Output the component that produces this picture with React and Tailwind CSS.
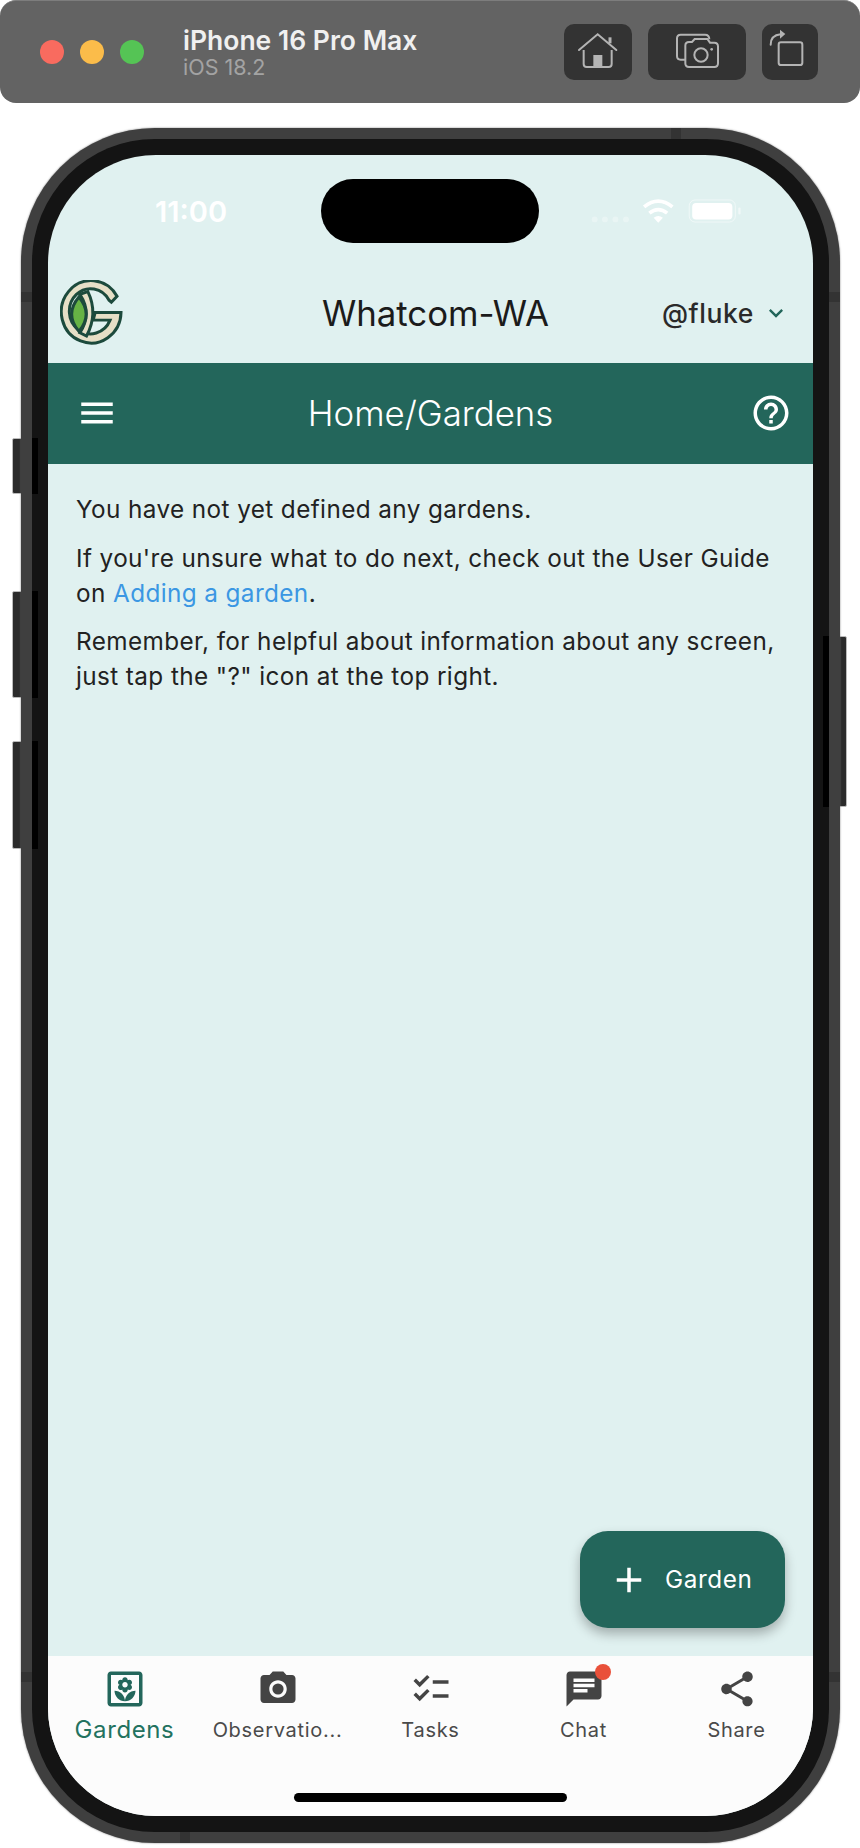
import React from 'react';
import { MdMenu, MdHelpOutline, MdKeyboardArrowDown, MdAdd, MdOutlineYard, MdPhotoCamera, MdChecklist, MdChat, MdShare } from 'react-icons/md';

const TABS = [
  { icon: MdOutlineYard, label: 'Gardens', active: true },
  { icon: MdPhotoCamera, label: 'Observatio...' },
  { icon: MdChecklist, label: 'Tasks' },
  { icon: MdChat, label: 'Chat', dot: true },
  { icon: MdShare, label: 'Share' },
];

// simulator window bar
const SimBar = () => (
  <div className="h-[103px] bg-[#636363] rounded-[16px] border-t border-[#7d7d7d] flex items-center pl-[40px] pr-[42px]">
    <div className="flex gap-[16px]">
      <span className="w-[24px] h-[24px] rounded-full bg-[#f96b5f]"></span>
      <span className="w-[24px] h-[24px] rounded-full bg-[#fbbc4a]"></span>
      <span className="w-[24px] h-[24px] rounded-full bg-[#55c455]"></span>
    </div>
    <div className="ml-[39px] flex flex-col">
      <span className="text-[26.5px] leading-[30px] font-semibold text-[#f0f0f0]">iPhone 16 Pro Max</span>
      <span className="text-[21.5px] leading-[24px] text-[#a3a3a3]">iOS 18.2</span>
    </div>
    <div className="ml-auto flex gap-[16px]">
      <div className="w-[68px] h-[56px] rounded-[10px] bg-[#333333]">
        <svg viewBox="402 72 204 168" className="w-full h-full" fill="none" stroke="#b4b4b4" strokeWidth="6">
          <path d="M447 150 L503 103 L559 150" strokeLinecap="round" />
          <path d="M540 112 V130" strokeWidth="9" />
          <path d="M461 150 V192 Q461 201 470 201 H536 Q545 201 545 192 V150" />
          <rect x="490" y="165" width="27" height="36" fill="#b4b4b4" stroke="none" />
        </svg>
      </div>
      <div className="w-[98px] h-[56px] rounded-[10px] bg-[#333333]">
        <svg viewBox="654 72 294 168" className="w-full h-full" fill="none" stroke="#b4b4b4" strokeWidth="6">
          <path d="M765 179 H752 Q741 179 741 168 V115 Q741 104 752 104 H825 Q838 104 838 118" />
          <path d="M777 126 L786 126 L794 117 H832 L840 128 H853 Q864 128 864 139 V190 Q864 201 853 201 H777 Q766 201 766 190 V137 Q766 126 777 126 Z" fill="#333333" />
          <circle cx="813" cy="165" r="20" />
          <circle cx="845" cy="148" r="4" fill="#b4b4b4" stroke="none" />
        </svg>
      </div>
      <div className="w-[56px] h-[56px] rounded-[10px] bg-[#333333]">
        <svg viewBox="996 72 168 168" className="w-full h-full" fill="none" stroke="#b4b4b4" strokeWidth="6">
          <rect x="1046" y="127" width="71" height="68" rx="7" />
          <path d="M1022 134 Q1022 106 1052 103" strokeLinecap="round" />
          <path d="M1050 89 L1066 102 L1050 116 Z" fill="#b4b4b4" stroke="none" />
        </svg>
      </div>
    </div>
  </div>
);

const Logo = () => (
  <svg viewBox="90 58 190 200" className="w-[63px] h-[67px]">
    <g stroke="#1c4a3c" strokeWidth="9" strokeLinejoin="miter">
      <path d="M262 106 A90 94 0 1 0 274 155 H196 L190 178 H241 A64 68 0 1 1 238 118 L245 124 Z" fill="#e6dfc6" />
      <path d="M150 100 Q188 158 150 216 L170 226 Q206 158 174 92 Z" fill="#e6dfc6" />
      <path d="M147 108 Q103 160 147 212 Q191 160 147 108 Z" fill="#66b345" />
    </g>
  </svg>
);

const StatusIcons = () => (
  <svg viewBox="480 590 460 85" className="w-[153px] h-[28px]" fill="none">
    <g fill="#ffffff" opacity="0.3">
      <circle cx="492" cy="658" r="9" />
      <circle cx="523" cy="658" r="9" />
      <circle cx="555" cy="658" r="9" />
      <circle cx="587" cy="658" r="9" />
    </g>
    <path d="M642 620 Q685 585 728 620" stroke="#ffffff" strokeWidth="11" />
    <path d="M658 639 Q685 617 712 639" stroke="#ffffff" strokeWidth="11" />
    <path d="M671 653 Q685 643 699 653 L685 668 Z" fill="#ffffff" />
    <rect x="779" y="599" width="140" height="67" rx="18" stroke="#ffffff" strokeOpacity="0.5" strokeWidth="3" />
    <rect x="788" y="608" width="122" height="50" rx="12" fill="#ffffff" />
    <rect x="928" y="622" width="7" height="21" rx="3" fill="#ffffff" fillOpacity="0.5" />
  </svg>
);

const Screen = () => (
  <div className="w-[765px] h-[1661px] rounded-[108px] overflow-hidden flex flex-col bg-[#e0f1f0] relative">
    {/* status bar */}
    <div className="h-[108px] shrink-0 flex items-start justify-between pl-[107px] pr-[70px]">
      <span className="mt-[38px] text-[29px] leading-[38px] font-semibold text-white">11:00</span>
      <div className="mt-[42px] flex"><StatusIcons /></div>
    </div>
    <div className="absolute left-[273px] top-[24px] w-[218px] h-[64px] rounded-full bg-black"></div>

    {/* header */}
    <div className="h-[100px] shrink-0 grid grid-cols-[182px_1fr_172px] items-center">
      <div className="pl-[12px] flex items-center"><Logo /></div>
      <div className="text-center text-[34.8px] leading-[42px] text-[#1b1b1b] whitespace-nowrap">Whatcom-WA</div>
      <div className="flex items-center justify-end pr-[23px]">
        <span className="text-[26.5px] leading-[34px] tracking-[0.6px] font-medium text-[#2a2a2a]">@fluke</span>
        <MdKeyboardArrowDown className="w-[28px] h-[28px] text-[#22665b] ml-[8px]" />
      </div>
    </div>

    {/* title bar */}
    <div className="h-[101px] shrink-0 bg-[#23665b] flex items-center justify-between pl-[28px] pr-[21px] pb-[2px]">
      <MdMenu className="w-[42px] h-[42px] text-white" />
      <span className="text-[34.8px] leading-[42px] font-light text-white mr-[7px]">Home/Gardens</span>
      <MdHelpOutline className="w-[42px] h-[42px] text-white" />
    </div>

    {/* content */}
    <div className="flex-1 relative pt-[28px] pl-[28px] pr-[24px] text-[24.3px] leading-[34.8px] tracking-[0.4px] text-[#222222]">
      <p className="mb-[14px]">You have not yet defined any gardens.</p>
      <p className="mb-[14px]">If you're unsure what to do next, check out the User Guide on <span className="text-[#3b97e3]">Adding a garden</span>.</p>
      <p>Remember, for helpful about information about any screen, just tap the "?" icon at the top right.</p>
      <button className="absolute right-[28px] bottom-[28px] w-[205px] h-[97px] rounded-[28px] bg-[#23665b] flex items-center pl-[28px] shadow-[0_6px_12px_rgba(0,0,0,0.28)]">
        <MdAdd className="w-[42px] h-[42px] text-white" />
        <span className="ml-[15px] text-[24.3px] tracking-[0.6px] text-white">Garden</span>
      </button>
    </div>

    {/* bottom tabs */}
    <div className="h-[160px] shrink-0 bg-[#fcfcfc] flex flex-col">
      <div className="grid grid-cols-5 pt-[12px]">
        {TABS.map((t) => (
          <div key={t.label} className="flex flex-col items-center">
            <div className="relative w-[42px] h-[42px]">
              <t.icon className={t.active ? 'w-[42px] h-[42px] text-[#23665b]' : 'w-[42px] h-[42px] text-[#444444]'} />
              {t.dot && <span className="absolute right-[-6px] top-[-4px] w-[16px] h-[16px] rounded-full bg-[#e9503a]"></span>}
            </div>
            {t.active
              ? <span className="mt-[3px] text-[24px] leading-[34px] tracking-[0.6px] text-[#23725f]">{t.label}</span>
              : <span className="mt-[5px] text-[20px] leading-[31px] tracking-[0.7px] text-[#4a4a4a] whitespace-nowrap">{t.label}</span>}
          </div>
        ))}
      </div>
      <div className="mt-auto mb-[14px] mx-auto w-[273px] h-[9px] rounded-full bg-black"></div>
    </div>
  </div>
);

export default function App() {
  return (
    <div className="w-[860px] h-[1848px] bg-white overflow-hidden font-[Inter,sans-serif]">
      <SimBar />
      <div className="relative w-[819px] h-[1715px] mt-[25px] ml-[21px]">
        {/* hardware buttons */}
        <div className="absolute left-[-9px] top-[310px] w-[10px] h-[56px] rounded-l-[2px] bg-[#2b2b2b] border border-[#bbbbbb]"></div>
        <div className="absolute left-[-9px] top-[463px] w-[10px] h-[107px] rounded-l-[2px] bg-[#2b2b2b] border border-[#bbbbbb]"></div>
        <div className="absolute left-[-9px] top-[613px] w-[10px] h-[108px] rounded-l-[2px] bg-[#2b2b2b] border border-[#bbbbbb]"></div>
        <div className="absolute right-[-7px] top-[508px] w-[8px] h-[171px] rounded-r-[2px] bg-[#2b2b2b] border border-[#bbbbbb]"></div>

        <div className="relative w-full h-full rounded-[134px] bg-[#3f3f3f] p-[11px] shadow-[0_0_2px_#777777]">
          <div className="rounded-[123px] bg-[#141414] p-[16px]">
            <Screen />
          </div>
          {/* antenna bands */}
          <div className="absolute left-[650px] top-0 w-[10px] h-[11px] bg-[#333333]"></div>
          <div className="absolute left-[159px] bottom-0 w-[10px] h-[11px] bg-[#333333]"></div>
          <div className="absolute left-0 top-[1544px] w-[11px] h-[10px] bg-[#333333]"></div>
          <div className="absolute right-0 top-[1544px] w-[11px] h-[10px] bg-[#333333]"></div>
          <div className="absolute left-0 top-[164px] w-[11px] h-[10px] bg-[#333333]"></div>
          <div className="absolute right-0 top-[164px] w-[11px] h-[10px] bg-[#333333]"></div>
          {/* inner button shadows */}
          <div className="absolute left-[11px] top-[310px] w-[6px] h-[56px] bg-[#000000]"></div>
          <div className="absolute left-[11px] top-[463px] w-[6px] h-[107px] bg-[#000000]"></div>
          <div className="absolute left-[11px] top-[613px] w-[6px] h-[108px] bg-[#000000]"></div>
          <div className="absolute right-[11px] top-[508px] w-[6px] h-[171px] bg-[#000000]"></div>
        </div>
      </div>
    </div>
  );
}
